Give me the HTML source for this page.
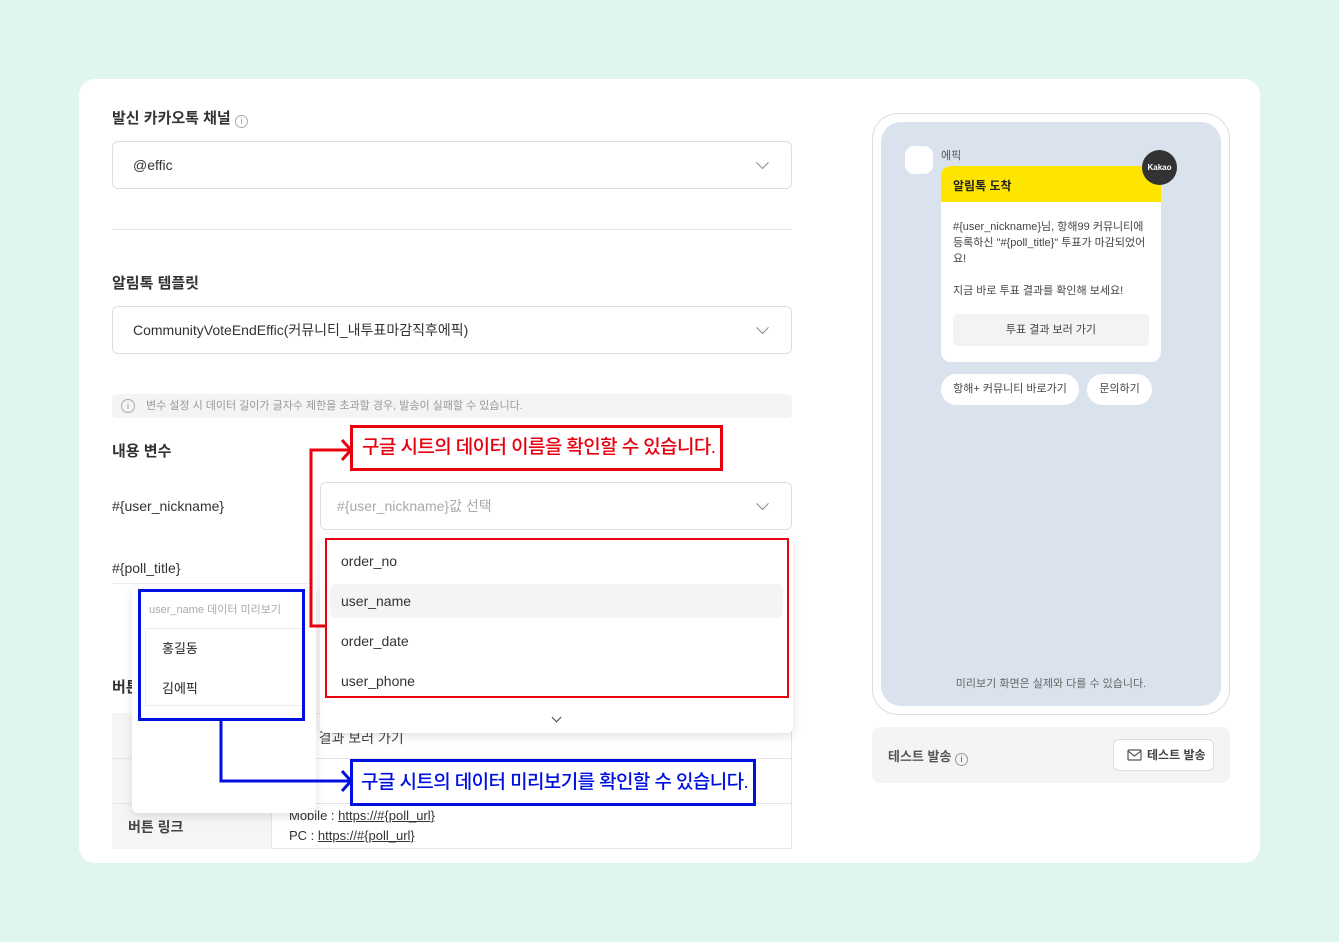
<!DOCTYPE html><html><head><meta charset="utf-8"><style>
*{box-sizing:border-box;margin:0;padding:0}
body{width:1339px;height:942px;background:#e0f5ef;font-family:"Liberation Sans","Noto Sans CJK KR",sans-serif;position:relative;overflow:hidden;color:#222}
.a{position:absolute}
.card{left:79px;top:79px;width:1181px;height:784px;background:#fff;border-radius:16px}
.h{font-size:15px;font-weight:bold;color:#333}
.sel{border:1px solid #ddd;border-radius:6px;background:#fff;font-size:14px;color:#333;padding-left:20px;display:flex;align-items:center}
.chev{position:absolute;right:24px;top:50%;width:9px;height:9px;border-right:1.5px solid #888;border-bottom:1.5px solid #888;transform:translateY(-75%) rotate(45deg)}
.t{font-size:14px;color:#333}
.item{position:absolute;left:16px;font-size:14px;color:#333}
.co{white-space:nowrap;font-size:19px;letter-spacing:-0.6px;font-weight:500}
</style></head><body>
<div class="a card"></div>
<div class="a h" style="left:112px;top:107px">발신 카카오톡 채널 <span style="display:inline-block;width:13px;height:13px;border:1px solid #aaa;border-radius:50%;font-size:9px;color:#999;text-align:center;line-height:11px;font-weight:normal;vertical-align:-1px">i</span></div>
<div class="a sel" style="left:112px;top:141px;width:680px;height:48px">@effic<span class="chev"></span></div>
<div class="a" style="left:112px;top:229px;width:680px;height:1px;background:#e5e5e5"></div>
<div class="a h" style="left:112px;top:272px">알림톡 템플릿</div>
<div class="a sel" style="left:112px;top:306px;width:680px;height:48px">CommunityVoteEndEffic(커뮤니티_내투표마감직후에픽)<span class="chev"></span></div>
<div class="a" style="left:112px;top:394px;width:680px;height:24px;background:#f3f4f5;border-radius:4px;font-size:11px;color:#999;padding-left:34px;line-height:24px">변수 설정 시 데이터 길이가 글자수 제한을 초과할 경우, 발송이 실패할 수 있습니다.<span class="a" style="left:9px;top:5px;width:14px;height:14px;border:1px solid #aaa;border-radius:50%;font-size:9px;line-height:12px;text-align:center">i</span></div>
<div class="a h" style="left:112px;top:440px">내용 변수</div>
<div class="a t" style="left:112px;top:498px">#{user_nickname}</div>
<div class="a t" style="left:112px;top:560px">#{poll_title}</div>
<div class="a" style="left:112px;top:583px;width:200px;height:1px;background:#eee"></div>
<div class="a sel" style="left:320px;top:482px;width:472px;height:48px;color:#aaa;padding-left:16px">#{user_nickname}값 선택<span class="chev"></span></div>
<div class="a h" style="left:112px;top:676px">버튼</div>
<div class="a" style="left:112px;top:713px;width:680px;height:136px;border:1px solid #e5e5e5"></div>
<div class="a" style="left:112px;top:713px;width:160px;height:136px;background:#f5f5f5;border-right:1px solid #e5e5e5"></div>
<div class="a" style="left:112px;top:758px;width:680px;height:1px;background:#e5e5e5"></div>
<div class="a" style="left:112px;top:803px;width:680px;height:1px;background:#e5e5e5"></div>
<div class="a" style="left:128px;top:817px;font-size:14px;font-weight:bold;color:#444">버튼 링크</div>
<div class="a" style="left:289px;top:728px;font-size:14px;color:#444">투표 결과 보러 가기</div>
<div class="a" style="left:289px;top:806px;font-size:13px;color:#333;line-height:20px">Mobile : <u>https://#{poll_url}</u><br>PC : <u>https://#{poll_url}</u></div>
<div class="a" style="left:320px;top:535px;width:473px;height:198px;background:#fff;border-radius:6px;box-shadow:0 3px 10px rgba(0,0,0,.12)">
<div class="a" style="left:10px;top:49px;width:453px;height:34px;background:#f3f4f6;border-radius:6px"></div>
<div class="item" style="left:21px;top:18px">order_no</div>
<div class="item" style="left:21px;top:58px">user_name</div>
<div class="item" style="left:21px;top:98px">order_date</div>
<div class="item" style="left:21px;top:138px">user_phone</div>
<div class="a" style="left:233px;top:179px;width:7px;height:7px;border-right:1.5px solid #444;border-bottom:1.5px solid #444;transform:rotate(45deg)"></div>
</div>
<div class="a" style="left:325px;top:538px;width:464px;height:160px;border:2px solid #e8000e"></div>
<div class="a" style="left:132px;top:588px;width:184px;height:225px;background:#fff;border-radius:6px;box-shadow:0 3px 10px rgba(0,0,0,.12)">
<div class="a" style="left:17px;top:13px;font-size:11px;color:#aaa">user_name 데이터 미리보기</div>
<div class="a" style="left:13px;top:40px;width:160px;height:78px;border:1px solid #eee"></div>
<div class="a" style="left:30px;top:50px;font-size:13px">홍길동</div>
<div class="a" style="left:30px;top:90px;font-size:13px">김에픽</div>
</div>
<div class="a" style="left:138px;top:589px;width:167px;height:132px;border:3px solid #0010e0"></div>
<svg class="a" style="left:300px;top:430px" width="60" height="210"><path d="M50 20H11V196H26" fill="none" stroke="#e8000e" stroke-width="3"/><path d="M42 10L51 20L42 30" fill="none" stroke="#e8000e" stroke-width="3"/></svg>
<div class="a co" style="left:350px;top:425px;width:373px;height:46px;border:3px solid #e8000e;background:#fff;color:#e8000e;line-height:40px;padding-left:9px">구글 시트의 데이터 이름을 확인할 수 있습니다.</div>
<svg class="a" style="left:210px;top:718px" width="150" height="75"><path d="M11 2V63H140" fill="none" stroke="#0010e0" stroke-width="3"/><path d="M132 53L141 63L132 73" fill="none" stroke="#0010e0" stroke-width="3"/></svg>
<div class="a co" style="left:350px;top:759px;width:406px;height:47px;border:3px solid #0010e0;background:#fff;color:#0010e0;line-height:41px;padding-left:8px">구글 시트의 데이터 미리보기를 확인할 수 있습니다.</div>
<div class="a" style="left:872px;top:113px;width:358px;height:602px;border:1px solid #ddd;border-radius:26px;background:#fff"></div>
<div class="a" style="left:881px;top:122px;width:340px;height:584px;background:#dae3ed;border-radius:20px"></div>
<div class="a" style="left:905px;top:146px;width:28px;height:28px;background:#fff;border-radius:9px"></div>
<div class="a" style="left:941px;top:147px;font-size:11px;color:#555">에픽</div>
<div class="a" style="left:941px;top:166px;width:220px;height:196px;background:#fff;border-radius:10px;overflow:hidden">
<div style="height:36px;background:#fee500;font-size:12px;font-weight:bold;padding:11px 12px">알림톡 도착</div>
<div style="font-size:11px;color:#444;line-height:16px;padding:17px 12px 0">#{user_nickname}님, 항해99 커뮤니티에 등록하신 "#{poll_title}" 투표가 마감되었어요!<br><br>지금 바로 투표 결과를 확인해 보세요!</div>
<div class="a" style="left:12px;top:148px;width:196px;height:32px;background:#f3f3f3;border-radius:4px;font-size:11px;color:#444;text-align:center;line-height:32px">투표 결과 보러 가기</div>
</div>
<div class="a" style="left:1142px;top:150px;width:35px;height:35px;background:#333;border-radius:50%;color:#fff;font-size:8px;font-weight:bold;text-align:center;line-height:35px">Kakao</div>
<div class="a" style="left:941px;top:374px;width:138px;height:31px;background:#fff;border-radius:16px;font-size:11px;color:#444;text-align:center;line-height:31px">항해+ 커뮤니티 바로가기</div>
<div class="a" style="left:1087px;top:374px;width:65px;height:31px;background:#fff;border-radius:16px;font-size:11px;color:#444;text-align:center;line-height:31px">문의하기</div>
<div class="a" style="left:881px;top:675px;width:340px;text-align:center;font-size:11px;color:#666">미리보기 화면은 실제와 다를 수 있습니다.</div>
<div class="a" style="left:872px;top:727px;width:358px;height:56px;background:#f3f4f5;border-radius:8px"></div>
<div class="a" style="left:888px;top:746px;font-size:13px;font-weight:bold;color:#555">테스트 발송 <span style="display:inline-block;width:13px;height:13px;border:1px solid #999;border-radius:50%;font-size:9px;text-align:center;line-height:11px;font-weight:normal;vertical-align:-1px">i</span></div>
<div class="a" style="left:1113px;top:739px;width:101px;height:32px;background:#fff;border:1px solid #ddd;border-radius:6px;font-size:12px;font-weight:bold;color:#444;line-height:30px;padding-left:33px;white-space:nowrap">테스트 발송
<svg class="a" style="left:13px;top:9px" width="15" height="12"><rect x="1" y="1" width="13" height="10" rx="1" fill="none" stroke="#555" stroke-width="1.2"/><path d="M1 2L7.5 7L14 2" fill="none" stroke="#555" stroke-width="1.2"/></svg></div>
</body></html>
